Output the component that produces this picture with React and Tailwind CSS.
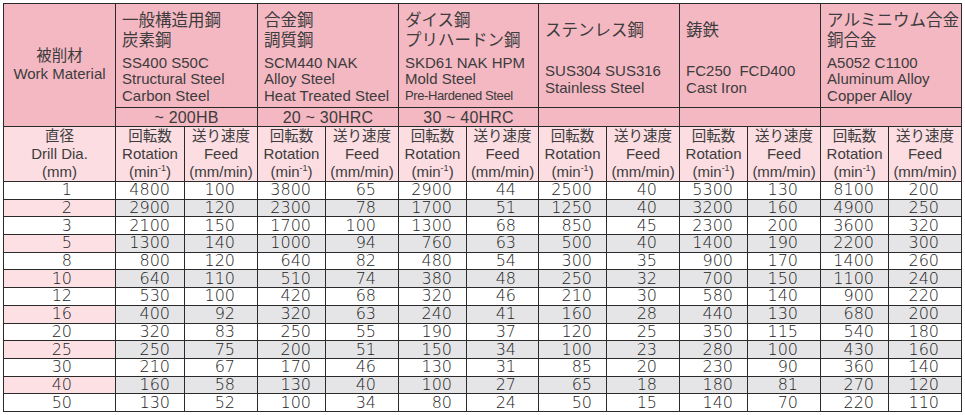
import React from 'react';

const groups = [
    {
        jp: ['一般構造用鋼', '炭素鋼'],
        en: ['SS400 S50C', 'Structural Steel', 'Carbon Steel'],
        hard: '~ 200HB',
    },
    {
        jp: ['合金鋼', '調質鋼'],
        en: ['SCM440 NAK', 'Alloy Steel', 'Heat Treated Steel'],
        hard: '20 ~ 30HRC',
    },
    {
        jp: ['ダイス鋼', 'プリハードン鋼'],
        en: ['SKD61 NAK HPM', 'Mold Steel', 'Pre-Hardened Steel'],
        small: 2,
        hard: '30 ~ 40HRC',
    },
    {
        jp: ['ステンレス鋼'],
        en: ['SUS304 SUS316', 'Stainless Steel'],
        hard: '',
    },
    {
        jp: ['鋳鉄'],
        en: ['FC250\u00a0 FCD400', 'Cast Iron'],
        hard: '',
    },
    {
        jp: ['アルミニウム合金', '銅合金'],
        en: ['A5052 C1100', 'Aluminum Alloy', 'Copper Alloy'],
        hard: '',
    },
];

const dia = [1, 2, 3, 5, 8, 10, 12, 16, 20, 25, 30, 40, 50];

// [rotation, feed] per group
const data = [
    [[4800, 2900, 2100, 1300, 800, 640, 530, 400, 320, 250, 210, 160, 130], [100, 120, 150, 140, 120, 110, 100, 92, 83, 75, 67, 58, 52]],
    [[3800, 2300, 1700, 1000, 640, 510, 420, 320, 250, 200, 170, 130, 100], [65, 78, 100, 94, 82, 74, 68, 63, 55, 51, 46, 40, 34]],
    [[2900, 1700, 1300, 760, 480, 380, 320, 240, 190, 150, 130, 100, 80], [44, 51, 68, 63, 54, 48, 46, 41, 37, 34, 31, 27, 24]],
    [[2500, 1250, 850, 500, 300, 250, 210, 160, 120, 100, 85, 65, 50], [40, 40, 45, 40, 35, 32, 30, 28, 25, 23, 20, 18, 15]],
    [[5300, 3200, 2300, 1400, 900, 700, 580, 440, 350, 280, 230, 180, 140], [130, 160, 200, 190, 170, 150, 140, 130, 115, 100, 90, 81, 70]],
    [[8100, 4900, 3600, 2200, 1400, 1100, 900, 680, 540, 430, 360, 270, 220], [200, 250, 320, 300, 260, 240, 220, 200, 180, 160, 140, 120, 110]],
];

const bd = 'border border-[#2a2a2a]';
const num = "font-['DejaVu_Sans',sans-serif] font-light text-[16px] text-[#222] leading-[16px] py-0";

const App = () => {
    return (
        <div className="bg-white w-[965px] h-[415px] overflow-hidden pt-[3px] pl-[3px] text-[#3c3c3c] text-[15px] font-['Liberation_Sans','Noto_Sans_CJK_JP',sans-serif]">
            <table className="table-fixed border-collapse w-[959px]">
                <colgroup>
                    <col className="w-[112px]" />
                    <col className="w-[69px]" /><col className="w-[73px]" />
                    <col className="w-[68px]" /><col className="w-[73px]" />
                    <col className="w-[68px]" /><col className="w-[72px]" />
                    <col className="w-[68px]" /><col className="w-[73px]" />
                    <col className="w-[68px]" /><col className="w-[73px]" />
                    <col className="w-[68px]" /><col className="w-[73px]" />
                </colgroup>
                <thead>
                    {/* material names */}
                    <tr className="h-[104px] bg-[#f4b8c3]">
                        <th rowSpan={2} className={`${bd} font-normal text-center leading-[18px]`}>
                            <div className="text-[15.5px]">被削材</div>
                            <div>Work Material</div>
                        </th>
                        {groups.map((g, i) => (
                            <th key={i} colSpan={2} className={`${bd} font-normal text-left align-top p-0 pl-[6px] whitespace-nowrap`}>
                                <div className="flex flex-col h-[103px]">
                                    <div className="h-[50px] flex flex-col justify-center text-[16.5px] leading-[20px] pt-[1px]">
                                        {g.jp.map((t) => <div key={t}>{t}</div>)}
                                    </div>
                                    <div className="flex-1 flex flex-col justify-center leading-[16.5px] pb-[2px]">
                                        {g.en.map((t, j) => (
                                            <div key={t} className={g.small === j ? 'text-[13px] tracking-[-0.4px]' : ''}>{t}</div>
                                        ))}
                                    </div>
                                </div>
                            </th>
                        ))}
                    </tr>
                    {/* hardness */}
                    <tr className="h-[19px] bg-[#f4b8c3]">
                        {groups.map((g, i) => (
                            <th key={i} colSpan={2} className={`${bd} font-normal text-center leading-[17px] p-0 text-[16px] tracking-[0.2px]`}>{g.hard}</th>
                        ))}
                    </tr>
                    {/* column titles */}
                    <tr className="h-[55px] bg-[#fbdde2]">
                        <th className={`${bd} font-normal text-center leading-[17.5px] p-0`}>
                            <div className="text-[14.5px]">直径</div>
                            <div>Drill Dia.</div>
                            <div>(mm)</div>
                        </th>
                        {groups.map((g, i) => (
                            <React.Fragment key={i}>
                                <th className={`${bd} font-normal text-center leading-[17.5px] p-0 whitespace-nowrap`}>
                                    <div className="text-[14.5px]">回転数</div>
                                    <div>Rotation</div>
                                    <div>(min<sup className="text-[9px] relative -top-[6px]">-1</sup>)</div>
                                </th>
                                <th className={`${bd} font-normal text-center leading-[17.5px] p-0 whitespace-nowrap`}>
                                    <div className="text-[14.5px]">送り速度</div>
                                    <div>Feed</div>
                                    <div>(mm/min)</div>
                                </th>
                            </React.Fragment>
                        ))}
                    </tr>
                </thead>
                <tbody>
                    {dia.map((d, r) => {
                        const even = r % 2 === 1;
                        return (
                            <tr key={d} className="h-[17.7px]">
                                <td className={`${bd} ${num} text-right pr-[43px] ${even ? 'bg-[#fde0e4]' : 'bg-white'}`}>{d}</td>
                                {data.map(([rot, feed], i) => (
                                    <React.Fragment key={i}>
                                        <td className={`${bd} ${num} text-right pr-[14px] ${even ? 'bg-[#e5e5e7]' : 'bg-white'}`}>{rot[r]}</td>
                                        <td className={`${bd} ${num} text-right pr-[22px] ${even ? 'bg-[#e5e5e7]' : 'bg-white'}`}>{feed[r]}</td>
                                    </React.Fragment>
                                ))}
                            </tr>
                        );
                    })}
                </tbody>
            </table>
        </div>
    );
};

export default App;
